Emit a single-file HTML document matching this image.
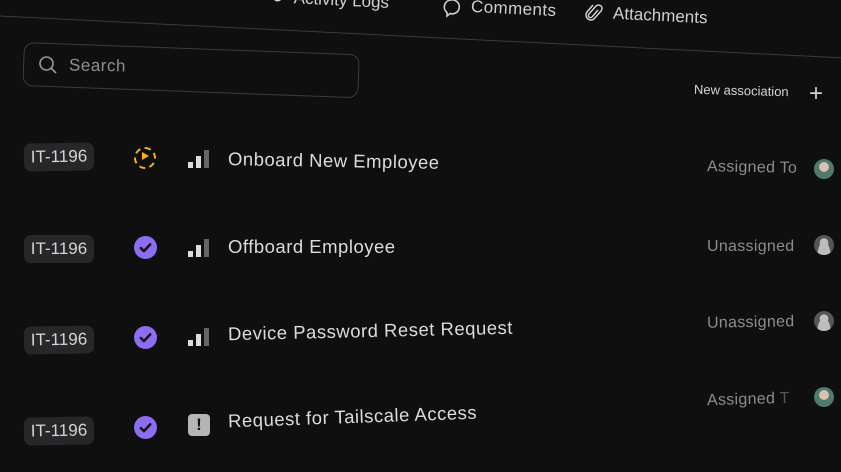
<!DOCTYPE html>
<html><head><style>
body{margin:0;width:841px;height:472px;background:#0f0f10;overflow:hidden;font-family:"Liberation Sans",sans-serif;position:relative}
.a{position:absolute;white-space:nowrap}
.badge{left:24px;width:70px;height:28px;background:#27272a;border-radius:7px;color:#d4d4d4;font-size:17px;line-height:28px;text-align:center}
.title{left:228px;color:#dcdcdc;font-size:18.5px;letter-spacing:0.5px}
.right{left:707px;color:#8c8c8c;font-size:16px;letter-spacing:0.3px}
.chk{left:134px}
.av{left:814px;width:20px;height:20px;border-radius:50%}
.bars{left:188px}
</style></head><body>
<div class="a" style="left:-10px;top:15px;width:880px;height:1px;background:#3a3a3c;transform:rotate(2.85deg);transform-origin:0 0"></div>
<div class="a" style="left:270px;top:-10px;color:#cfcfcf;font-size:17px;transform:rotate(2.8deg)">&#x21bb;&nbsp;&nbsp;Activity Logs</div>
<svg class="a" style="left:441px;top:-2px" width="20" height="20" viewBox="0 0 20 20"><path d="M10 2a7 7 0 0 0-4 12.5V18l3-2.5a7 7 0 1 0 1-13.5z" fill="none" stroke="#cfcfcf" stroke-width="1.6"/></svg>
<div class="a" style="left:471px;top:-1px;color:#cfcfcf;font-size:17px;transform:rotate(2.8deg);letter-spacing:0.4px">Comments</div>
<svg class="a" style="left:585px;top:4px" width="18" height="20" viewBox="0 0 18 20"><path d="M13 6l-6 7a2 2 0 0 1-3-3l7-8a3.5 3.5 0 0 1 5 5l-7 8a5 5 0 0 1-7-7l6-7" fill="none" stroke="#cfcfcf" stroke-width="1.5"/></svg>
<div class="a" style="left:613px;top:6px;color:#cfcfcf;font-size:17px;transform:rotate(2.8deg)">Attachments</div>
<div class="a" style="left:24px;top:42px;width:334px;height:42px;border:1.5px solid #3b3b3d;border-radius:10px;transform:rotate(2.1deg);transform-origin:0 0"></div>
<svg class="a" style="left:38px;top:55px" width="20" height="20" viewBox="0 0 20 20"><circle cx="8.5" cy="8.5" r="6.5" fill="none" stroke="#9a9a9a" stroke-width="1.6"/><path d="M13.5 13.5l4.5 4.5" stroke="#9a9a9a" stroke-width="1.6"/></svg>
<div class="a" style="left:69px;top:56px;color:#8e8e8e;font-size:17px;transform:rotate(1deg);letter-spacing:0.5px">Search</div>
<div class="a" style="left:694px;top:83px;color:#d4d4d4;font-size:13px;transform:rotate(1.5deg)">New association</div>
<div class="a" style="left:809px;top:80px;color:#cfcfcf;font-size:24px;font-weight:300">+</div>

<div class="a badge" style="top:143px;transform:rotate(-1deg)">IT-1196</div>
<div class="a" style="left:134px;top:147px;width:18px;height:18px;border-radius:50%;border:2px dashed #f5b21c"></div>
<div class="a" style="left:142px;top:152px;width:0;height:0;border-left:7px solid #f5b21c;border-top:4.5px solid transparent;border-bottom:4.5px solid transparent"></div>
<svg class="a bars" style="top:150px" width="22" height="20"><rect x="0" y="12" width="5" height="6" fill="#ddd"/><rect x="8" y="6" width="5" height="12" fill="#ddd"/><rect x="16" y="0" width="5" height="18" fill="#666"/></svg>
<div class="a title" style="top:150px;transform:rotate(1deg)">Onboard New Employee</div>
<div class="a right" style="top:159px;transform:rotate(1deg)">Assigned To</div>
<div class="a av" style="top:159px;background:radial-gradient(circle at 50% 40%,#d9c3b0 0 30%,#4f7a6c 32%)"></div>

<div class="a badge" style="top:235px">IT-1196</div>
<svg class="a chk" style="top:236px" width="23" height="23" viewBox="0 0 22 22"><circle cx="11" cy="11" r="11" fill="#8d6df2"/><path d="M6.5 11.5l3 3 6-6.5" fill="none" stroke="#111" stroke-width="2.4" stroke-linecap="round" stroke-linejoin="round"/></svg>
<svg class="a bars" style="top:239px" width="22" height="20"><rect x="0" y="12" width="5" height="6" fill="#ddd"/><rect x="8" y="6" width="5" height="12" fill="#ddd"/><rect x="16" y="0" width="5" height="18" fill="#666"/></svg>
<div class="a title" style="top:236px">Offboard Employee</div>
<div class="a right" style="top:238px">Unassigned</div>
<div class="a av" style="top:235px;background:radial-gradient(circle at 50% 38%,#bdbdbd 0 26%,transparent 28%),radial-gradient(ellipse at 50% 100%,#bdbdbd 0 45%,#555 47%)"></div>

<div class="a badge" style="top:326px;transform:rotate(-1deg)">IT-1196</div>
<svg class="a chk" style="top:326px" width="23" height="23" viewBox="0 0 22 22"><circle cx="11" cy="11" r="11" fill="#8d6df2"/><path d="M6.5 11.5l3 3 6-6.5" fill="none" stroke="#111" stroke-width="2.4" stroke-linecap="round" stroke-linejoin="round"/></svg>
<svg class="a bars" style="top:328px" width="22" height="20"><rect x="0" y="12" width="5" height="6" fill="#ddd"/><rect x="8" y="6" width="5" height="12" fill="#ddd"/><rect x="16" y="0" width="5" height="18" fill="#666"/></svg>
<div class="a title" style="top:320px;transform:rotate(-1.3deg)">Device Password Reset Request</div>
<div class="a right" style="top:314px;transform:rotate(-1deg)">Unassigned</div>
<div class="a av" style="top:311px;background:radial-gradient(circle at 50% 38%,#bdbdbd 0 26%,transparent 28%),radial-gradient(ellipse at 50% 100%,#bdbdbd 0 45%,#555 47%)"></div>

<div class="a badge" style="top:417px;transform:rotate(-1deg)">IT-1196</div>
<svg class="a chk" style="top:416px" width="23" height="23" viewBox="0 0 22 22"><circle cx="11" cy="11" r="11" fill="#8d6df2"/><path d="M6.5 11.5l3 3 6-6.5" fill="none" stroke="#111" stroke-width="2.4" stroke-linecap="round" stroke-linejoin="round"/></svg>
<div class="a" style="left:188px;top:414px;width:22px;height:22px;border-radius:4px;background:#b5b5b5;color:#111;font-weight:bold;font-size:17px;line-height:22px;text-align:center">!</div>
<div class="a title" style="top:406px;transform:rotate(-2deg)">Request for Tailscale Access</div>
<div class="a right" style="top:391px;transform:rotate(-1.5deg)">Assigned <span style="color:#555">T</span></div>
<div class="a av" style="top:387px;background:radial-gradient(circle at 50% 40%,#d9c3b0 0 30%,#4f7a6c 32%)"></div>
</body></html>
